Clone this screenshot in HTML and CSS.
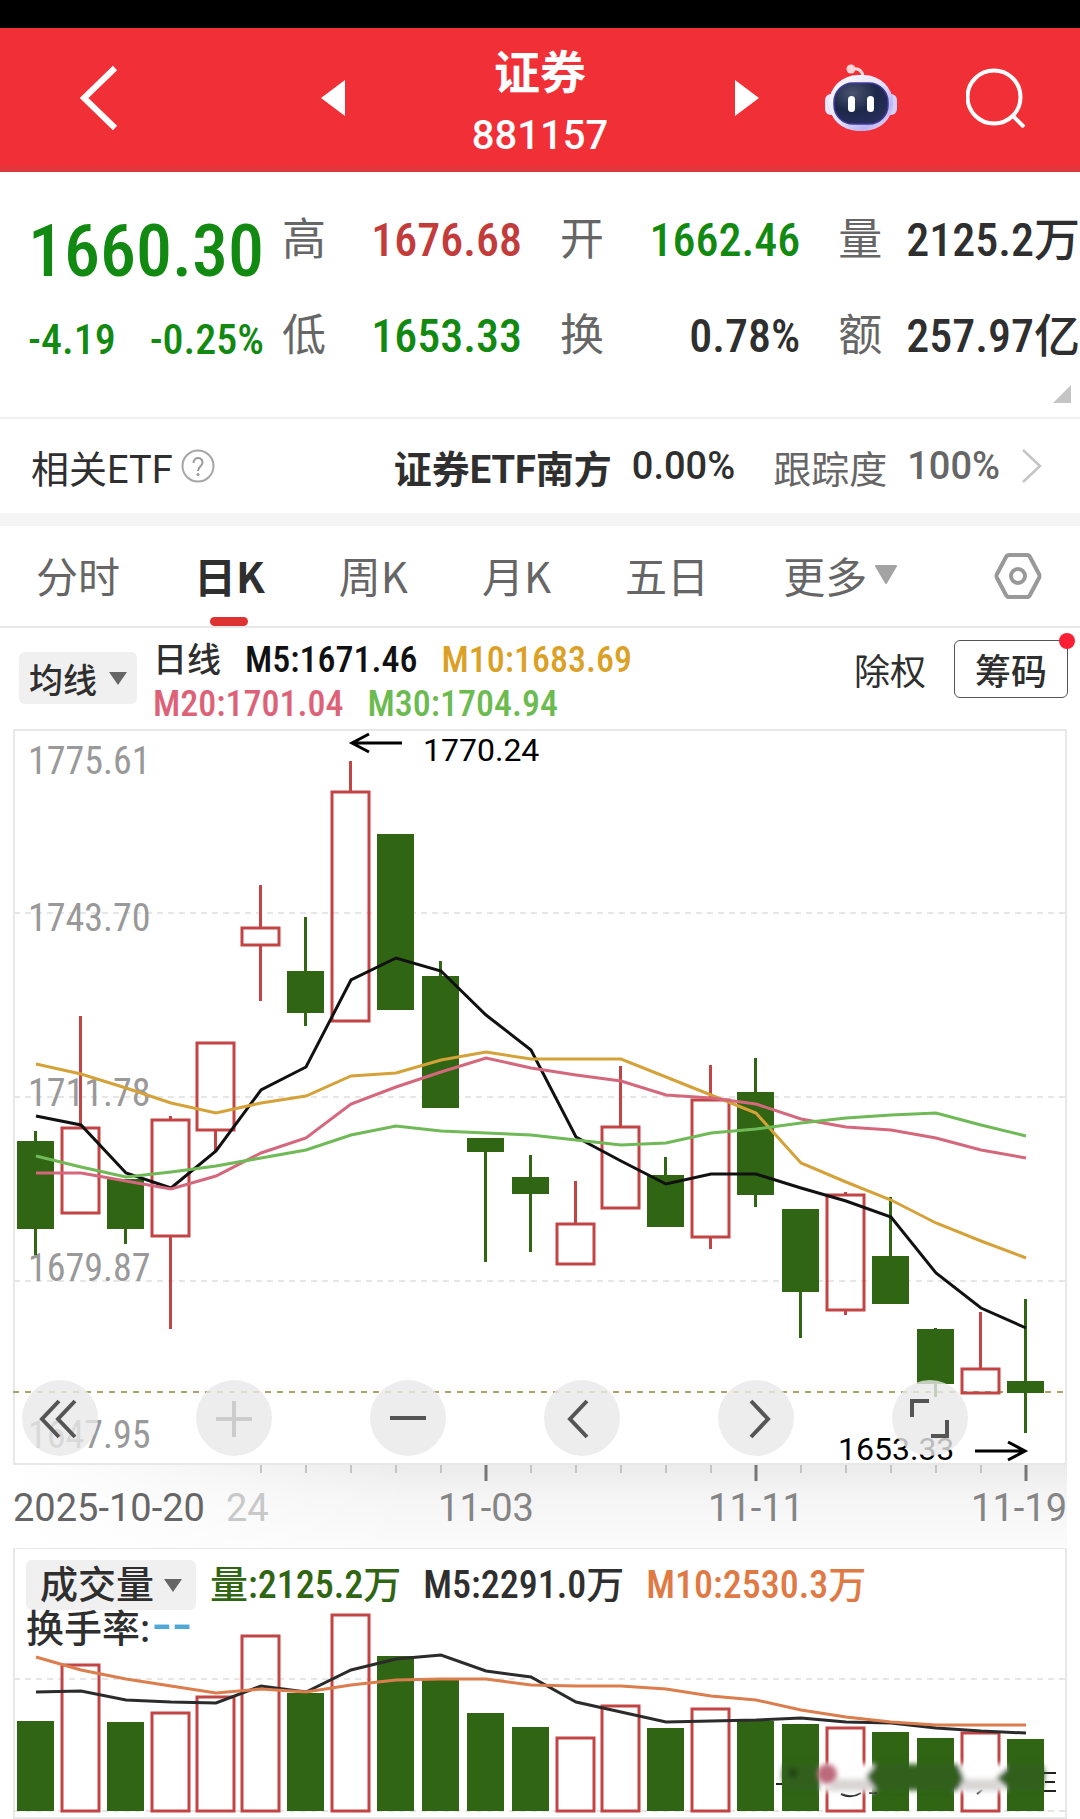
FILE: index.html
```html
<!DOCTYPE html>
<html lang="zh-CN">
<head>
<meta charset="utf-8">
<meta name="viewport" content="width=device-width, initial-scale=1">
<title>证券 881157</title>
<link rel="stylesheet" href="styles.css">
</head>
<body>
<div class="status-bar"></div>
<header class="header">
  <button class="icon-btn back" aria-label="返回">
    <svg width="38" height="66" viewBox="0 0 38 66"><path d="M35 3 4 33l31 30" fill="none" stroke="#fff" stroke-width="6"/></svg>
  </button>
  <div class="switcher">
    <button class="icon-btn" aria-label="上一个"><svg width="24" height="36" viewBox="0 0 24 36"><path d="M24 0v36L0 18z" fill="#fff"/></svg></button>
    <h1 class="title"><span class="name">证券</span><span class="code">881157</span></h1>
    <button class="icon-btn" aria-label="下一个"><svg width="24" height="36" viewBox="0 0 24 36"><path d="M0 0v36l24-18z" fill="#fff"/></svg></button>
  </div>
  <div class="actions">
    <button class="icon-btn" aria-label="智能助手">
      <svg width="72" height="68" viewBox="0 0 72 68">
        <defs>
          <linearGradient id="shell" x1="0" y1="0" x2="1" y2="1"><stop offset="0" stop-color="#fff"/><stop offset=".5" stop-color="#e6e2fb"/><stop offset=".75" stop-color="#b9b4f2"/><stop offset="1" stop-color="#fbe3ee"/></linearGradient>
          <radialGradient id="visor" cx=".35" cy=".25" r=".9"><stop offset="0" stop-color="#4a5470"/><stop offset=".5" stop-color="#1d2749"/><stop offset="1" stop-color="#2a3160"/></radialGradient>
        </defs>
        <path d="M27 5c6-1 10 1 11 7" fill="none" stroke="#fbd9dc" stroke-width="3"/>
        <circle cx="26" cy="5" r="4.500" fill="#ffd5d8"/>
        <rect x="0" y="30" width="14" height="21" rx="6" fill="#e9e6fb"/>
        <rect x="58" y="30" width="14" height="21" rx="6" fill="#d3cff8"/>
        <rect x="4" y="11" width="64" height="56" rx="29" fill="url(#shell)"/>
        <rect x="9" y="19" width="54" height="41" rx="19" fill="url(#visor)" stroke="#3f3a9c" stroke-width="1.500"/>
        <rect x="23" y="32" width="7" height="16" rx="3.500" fill="#fff"/>
        <rect x="42" y="32" width="7" height="16" rx="3.500" fill="#fff"/>
      </svg>
    </button>
    <button class="icon-btn" aria-label="搜索">
      <svg width="60" height="60" viewBox="0 0 60 60" fill="none" stroke="#fff" stroke-width="4"><circle cx="28" cy="29" r="26.500"/><path d="m47 48 11 11"/></svg>
    </button>
  </div>
</header>

<section class="quote">
  <div class="last down">
    <strong class="price">1660.30</strong>
    <p class="change"><span>-4.19</span><span>-0.25%</span></p>
  </div>
  <dl class="stats">
    <dt>高</dt><dd class="up">1676.68</dd><dt>开</dt><dd class="down">1662.46</dd><dt>量</dt><dd class="total">2125.2<b>万</b></dd>
    <dt>低</dt><dd class="down">1653.33</dd><dt>换</dt><dd>0.78%</dd><dt>额</dt><dd class="total">257.97<b>亿</b></dd>
  </dl>
  <svg class="corner" width="18" height="18" viewBox="0 0 18 18"><path d="M18 0v18H0z" fill="#c4c4c4"/></svg>
</section>

<a class="etf" href="#etf">
  <span>相关ETF</span>
  <svg width="34" height="34" viewBox="0 0 34 34"><circle cx="17" cy="17" r="15.500" fill="none" stroke="#a6a6a6" stroke-width="2"/><path d="M12.500 14c0-7 9.500-6.500 9 0-.3 3-4.500 4-4.500 8" fill="none" stroke="#999" stroke-width="2"/><circle cx="17" cy="25.500" r="1.500" fill="#999"/></svg>
  <span class="etf-name">证券ETF南方</span>
  <span class="etf-pct">0.00%</span>
  <span class="etf-track">跟踪度</span>
  <span class="etf-rate">100%</span>
  <svg class="etf-more" width="20" height="34" viewBox="0 0 20 34"><path d="m1 1 17 16L1 33" fill="none" stroke="#c4c4c4" stroke-width="2.500"/></svg>
</a>

<nav class="tabs">
  <button class="tab">分时</button>
  <button class="tab active">日K</button>
  <button class="tab">周K</button>
  <button class="tab">月K</button>
  <button class="tab">五日</button>
  <button class="tab">更多<svg width="22" height="20" viewBox="0 0 22 20"><path d="M1 1h20L11 18z" fill="#a3a3a3" stroke="#a3a3a3" stroke-width="2" stroke-linejoin="round"/></svg></button>
  <button class="icon-btn settings" aria-label="设置">
    <svg width="48" height="48" viewBox="0 0 48 48" fill="none" stroke="#999" stroke-width="4"><path d="M15 3h18q2 0 3 2l9 17q1 2 0 4l-9 17q-1 2-3 2H15q-2 0-3-2L3 26q-1-2 0-4l9-17q1-2 3-2z"/><circle cx="24" cy="24" r="7"/></svg>
  </button>
</nav>

<section class="legend">
  <button class="chip">均线<svg width="18" height="13" viewBox="0 0 18 13"><path d="M0 0h18L9 13z" fill="#666"/></svg></button>
  <div class="averages">
    <p><b>日线</b><span class="m5">M5:1671.46</span><span class="m10">M10:1683.69</span></p>
    <p><span class="m20">M20:1701.04</span><span class="m30">M30:1704.94</span></p>
  </div>
  <div class="options">
    <button>除权</button>
    <button class="outlined">筹码<i class="dot"></i></button>
  </div>
</section>

<section class="chart">
  <svg id="price-chart" class="canvas" viewBox="0 728 1080 820" role="img" aria-label="日K线图">
    <defs>
      <linearGradient id="fall" x1="0" y1="0" x2="0" y2="1"><stop offset="0" stop-color="#ebebeb"/><stop offset=".4" stop-color="#f5f5f5"/><stop offset="1" stop-color="#fbfbfb"/></linearGradient>
      <linearGradient id="fade" x1="0" y1="0" x2="1" y2="0"><stop offset="0" stop-color="#fff"/><stop offset="1" stop-color="#fff" stop-opacity="0"/></linearGradient>
    </defs>
    <rect x="14" y="1464" width="1053" height="84" fill="url(#fall)"/>
    <rect x="13" y="1464" width="400" height="84" fill="url(#fade)"/>
    <rect class="frame" x="14" y="730" width="1052" height="734"/>
    <path class="grid-line" d="M14 913h1052M14 1097h1052M14 1281h1052"/>
    <path d="M13 1392h1053" stroke="#a9a56c" stroke-width="2" stroke-dasharray="6 6"/>
    <g class="scale">
      <text x="28" y="774">1775.61</text>
      <text x="28" y="931">1743.70</text>
      <text x="28" y="1106">1711.78</text>
      <text x="28" y="1281">1679.87</text>
      <text x="28" y="1448">1647.95</text>
    </g>
    <g id="candles"></g>
    <g id="price-lines"></g>
    <g id="ticks"></g>
    <g class="mark">
      <path d="M402 743h-50m17-9-17 9 17 9M975 1451h50m-17-9 17 9-17 9"/>
      <text x="423" y="761">1770.24</text>
      <text x="838" y="1460">1653.33</text>
    </g>
    <g class="dates">
      <text class="start" x="13" y="1521">2025-10-20</text>
      <text class="ghost" x="226" y="1521">24</text>
      <text x="486" y="1521" text-anchor="middle">11-03</text>
      <text x="756" y="1521" text-anchor="middle">11-11</text>
      <text x="1067" y="1521" text-anchor="end">11-19</text>
    </g>
  </svg>
  <div class="controls">
    <button aria-label="最左"><svg viewBox="0 0 76 76"><path d="M37 21 20 39l17 18M53 21 36 39l17 18"/></svg></button>
    <button aria-label="放大" disabled><svg viewBox="0 0 76 76"><path d="M20 39h36M38 21v36"/></svg></button>
    <button aria-label="缩小"><svg viewBox="0 0 76 76"><path d="M20 38h36"/></svg></button>
    <button aria-label="左移"><svg viewBox="0 0 76 76"><path d="M43 21 26 39l17 18"/></svg></button>
    <button aria-label="右移"><svg viewBox="0 0 76 76"><path d="m33 21 17 18-17 18"/></svg></button>
    <button aria-label="全屏"><svg viewBox="0 0 76 76"><path d="M20 37V21h17M55 40v16H39"/></svg></button>
  </div>
</section>

<section class="chart">
  <svg id="volume-chart" class="canvas" viewBox="0 1548 1080 271" role="img" aria-label="成交量图">
    <defs><filter id="soft" x="-20%" y="-40%" width="140%" height="180%"><feGaussianBlur stdDeviation="2.500"/></filter></defs>
    <rect class="frame" x="14" y="1548" width="1052" height="270"/>
    <path class="grid-line" d="M14 1679h1052M14 1811h1052"/>
    <g id="bars"></g>
    <g id="volume-lines"></g>
    <path d="M841 1794q10 5 20-1M869 1793h8M977 1794l5-4M1044 1773h12M1045 1782h10M1044 1791h12M776 1784h6" fill="none" stroke="#222" stroke-width="2"/>
    <g filter="url(#soft)">
      <path d="M822 1764h52v28h-52zM955 1764h50v28h-50z" fill="#fff"/>
      <path d="M836 1779h36l4 12h-52zM958 1779h38l8 12h-40z" fill="#d9d5d5"/>
      <path d="M784 1764h32l4 26h-34l-4-14zM866 1776l10-12h82l6 14-6 13-82-1zM996 1778l16-14h30l3 10-3 17h-32z" fill="#33611c"/>
      <circle cx="793" cy="1773" r="5" fill="#224515"/>
    </g>
    <circle cx="827" cy="1774" r="10" fill="#bb6a7b" filter="url(#soft)"/>
  </svg>
  <div class="volume-head">
    <button class="chip big">成交量<svg width="18" height="13" viewBox="0 0 18 13"><path d="M0 0h18L9 13z" fill="#666"/></svg></button>
    <span class="vol">量:2125.2万</span>
    <span class="v5">M5:2291.0万</span>
    <span class="v10">M10:2530.3万</span>
    <p class="turnover">换手率:<span class="none">--</span></p>
  </div>
</section>
<script src="chart.js"></script>
</body>
</html>
```
FILE: styles.css
```css
* { box-sizing: border-box; margin: 0; padding: 0; }
body {
  background: #fff;
  color: #2f2f2f;
  font-family: Roboto, "Noto Sans CJK SC", sans-serif;
  font-size: 38px;
}
svg { display: block; flex: none; }
button { border: 0; background: none; font: inherit; color: inherit; }
a { color: inherit; text-decoration: none; }

.status-bar { height: 28px; background: #000; }
.header {
  display: grid;
  grid-template-columns: 1fr 438px 1fr;
  align-items: center;
  height: 144px;
  background: #f12f36;
  border-bottom: 6px solid #e1373c;
  color: #fff;
}
.back { justify-self: start; margin-left: 80px; }
.switcher { display: flex; align-items: center; justify-content: space-between; }
.title { display: flex; flex-direction: column; align-items: center; padding-top: 14px; font-weight: 500; }
.name { font-size: 46px; line-height: 62px; font-weight: 700; }
.code { font-size: 40px; line-height: 64px; }
.actions { display: flex; align-items: center; justify-content: space-between; padding: 0 54px 0 66px; }

.quote { position: relative; display: flex; height: 247px; padding-top: 20px; border-bottom: 2px solid #f1f1f1; }
.down { color: #128a12; }
.up { color: #c23c3c; }
.last { width: 282px; padding: 16px 18px 0 28px; font-family: "Roboto Condensed", Roboto, sans-serif; font-weight: 500; }
.price { display: block; font-size: 72px; line-height: 88px; font-weight: 500; }
.change { display: flex; justify-content: space-between; font-size: 42px; line-height: 88px; }
.stats {
  flex: 1;
  display: grid;
  grid-template-columns: 44px 1fr 82px 1fr 82px auto;
  grid-auto-rows: 96px;
  line-height: 96px;
}
.stats dt { font-size: 44px; color: #666; text-align: right; }
.stats dd { font-family: "Roboto Condensed", Roboto, "Noto Sans CJK SC", sans-serif; font-size: 46px; font-weight: 500; text-align: right; }
.stats .total { padding-left: 24px; white-space: nowrap; }
.stats b { font-size: 46px; font-weight: 500; }
.corner { position: absolute; right: 9px; bottom: 14px; }

.etf {
  display: flex;
  align-items: center;
  height: 107px;
  padding: 0 38px 0 31px;
  border-bottom: 13px solid #f4f4f4;
  white-space: nowrap;
}
.etf svg { margin-left: 8px; }
.etf-name { font-weight: 700; margin-left: auto; }
.etf-pct { font-weight: 500; margin-left: 20px; }
.etf-track { color: #666; margin-left: 38px; }
.etf-rate { color: #666; font-weight: 500; margin-left: 20px; }
.etf .etf-more { margin-left: 22px; }

.tabs {
  display: flex;
  align-items: center;
  gap: 74px;
  height: 102px;
  padding: 0 38px 0 36px;
  border-bottom: 2px solid #e8e8e8;
  color: #666;
  font-family: "Noto Sans CJK SC", sans-serif;
  font-size: 42px;
}
.tab { position: relative; display: flex; align-items: center; gap: 8px; height: 100px; padding-bottom: 3px; white-space: nowrap; }
.settings { margin-left: auto; }
.active { color: #2f2f2f; font-weight: 700; }
.active::after {
  content: "";
  position: absolute;
  left: 50%;
  bottom: 0;
  width: 38px;
  height: 9px;
  margin-left: -19px;
  border-radius: 5px;
  background: #dc3232;
}

.legend { display: flex; align-items: center; height: 100px; padding: 0 12px 0 19px; }
.chip {
  display: flex;
  align-items: center;
  gap: 12px;
  height: 52px;
  padding: 0 10px;
  border-radius: 6px;
  background: #f0f0f0;
  font-size: 34px;
  font-weight: 500;
}
.averages { flex: 1; padding-top: 8px; margin-left: 16px; font-family: "Roboto Condensed", Roboto, "Noto Sans CJK SC", sans-serif; font-size: 36px; font-weight: 500; line-height: 44px; }
.averages p { display: flex; gap: 24px; white-space: nowrap; }
.averages b { font-size: 34px; font-weight: 500; }
.m5 { color: #111; }
.m10 { color: #dba126; }
.m20 { color: #dd6278; }
.m30 { color: #6cbb50; }
.options { display: flex; align-items: center; gap: 28px; padding-bottom: 18px; font-size: 36px; }
.outlined { position: relative; width: 114px; height: 58px; border: 1px solid #555; border-radius: 6px; font-weight: 500; }
.dot { position: absolute; top: -8px; right: -8px; width: 16px; height: 16px; border-radius: 50%; background: #fa1f34; }

.chart { position: relative; }
.canvas { width: 100%; height: auto; }
.frame { fill: none; stroke: #e8e8e8; stroke-width: 2; }
.grid-line { fill: none; stroke: #e6e6e6; stroke-width: 2; stroke-dasharray: 6 5; }
.scale text { font: 38px "Roboto Condensed", Roboto, sans-serif; fill: #999; }
.mark path { fill: none; stroke: #000; stroke-width: 3; }
.mark text { font-size: 32px; fill: #000; }
.dates text { font-size: 38px; fill: #858585; }
.dates .start { fill: #666; }
.dates .ghost { fill: #c8c8c8; }
.rise { fill: none; stroke: #c34444; stroke-width: 3; }
.drop { fill: #2f6513; stroke: #2f6513; }
.line { fill: none; stroke-width: 3; }

.controls { position: absolute; top: 652px; left: 22px; display: flex; gap: 98px; }
.controls button { width: 76px; height: 76px; border-radius: 50%; background: rgba(233, 233, 233, .8); }
.controls path { fill: none; stroke: #555; stroke-width: 4; }
.controls button:disabled path { stroke: #ccc; }

.volume-head {
  position: absolute;
  top: 12px;
  left: 26px;
  display: grid;
  grid-template-columns: auto auto auto auto;
  column-gap: 22px;
  align-items: center;
  font-family: "Roboto Condensed", Roboto, "Noto Sans CJK SC", sans-serif;
  font-weight: 500;
  line-height: 50px;
  white-space: nowrap;
}
.big { gap: 10px; height: 50px; padding: 0 14px; margin-right: -8px; font-size: 38px; }
.vol { color: #2f6513; }
.v10 { color: #e07a45; }
.turnover { grid-column: 1 / -1; height: 38px; line-height: 38px; }
.none { margin-left: 2px; color: #4fa9d8; font-family: "DejaVu Sans", sans-serif; font-size: 56px; font-weight: 400; line-height: 0; }
```
FILE: chart.js
```js
const SVG = "http://www.w3.org/2000/svg";
const STEP = 45, FIRST = 35, HALF = 18;

// [direction, high, body top, body bottom, low, volume top]
const days = [
  ["g", 1131, 1141, 1229, 1255, 1721], ["r", 1016, 1128, 1213, 1213, 1665],
  ["g", 1179, 1179, 1229, 1244, 1722], ["r", 1116, 1120, 1236, 1329, 1713],
  ["r", 1043, 1043, 1130, 1151, 1697], ["r", 885, 928, 945, 1001, 1636],
  ["g", 917, 971, 1013, 1026, 1693], ["r", 761, 792, 1021, 1021, 1615],
  ["g", 834, 834, 1010, 1010, 1656], ["g", 961, 976, 1108, 1108, 1680],
  ["g", 1138, 1138, 1152, 1262, 1713], ["g", 1155, 1177, 1194, 1252, 1727],
  ["r", 1181, 1224, 1264, 1264, 1738], ["r", 1066, 1127, 1208, 1208, 1706],
  ["g", 1157, 1175, 1227, 1227, 1728], ["r", 1065, 1100, 1237, 1249, 1709],
  ["g", 1058, 1092, 1195, 1207, 1721], ["g", 1209, 1209, 1292, 1338, 1724],
  ["r", 1192, 1195, 1310, 1315, 1728], ["g", 1197, 1256, 1304, 1304, 1732],
  ["g", 1328, 1329, 1384, 1397, 1738], ["r", 1312, 1369, 1393, 1393, 1733],
  ["g", 1299, 1381, 1393, 1433, 1739]
];
const priceLines = {
  "#111": [1116, 1125, 1173, 1188, 1151, 1090, 1067, 980, 958, 971, 1015, 1050, 1137, 1161, 1184, 1174, 1174, 1188, 1201, 1217, 1273, 1308, 1328],
  "#d4a238": [1064, 1074, 1088, 1103, 1113, 1103, 1096, 1076, 1073, 1060, 1052, 1059, 1059, 1059, 1077, 1095, 1113, 1163, 1182, 1200, 1223, 1241, 1258],
  "#d5677c": [1173, 1173, 1181, 1189, 1176, 1153, 1138, 1104, 1087, 1072, 1058, 1068, 1075, 1081, 1095, 1098, 1104, 1119, 1127, 1130, 1138, 1150, 1158],
  "#70b957": [1156, 1167, 1177, 1172, 1166, 1158, 1150, 1135, 1126, 1131, 1133, 1135, 1140, 1145, 1143, 1133, 1129, 1123, 1118, 1115, 1113, 1125, 1136]
};
const volumeLines = {
  "#2b2b2b": [1692, 1691, 1700, 1702, 1703, 1686, 1692, 1670, 1659, 1655, 1671, 1677, 1702, 1712, 1722, 1721, 1720, 1718, 1722, 1723, 1728, 1731, 1733],
  "#db7d4d": [1657, 1670, 1679, 1686, 1693, 1689, 1692, 1685, 1680, 1679, 1679, 1685, 1686, 1686, 1689, 1696, 1700, 1710, 1717, 1722, 1725, 1725, 1725]
};

const centre = i => FIRST + i * STEP;
function add(parent, tag, attrs) {
  const node = document.createElementNS(SVG, tag);
  for (const key in attrs) node.setAttribute(key, attrs[key]);
  document.getElementById(parent).appendChild(node);
}
function box(parent, kind, x, top, bottom) {
  if (kind === "g") add(parent, "rect", { x: x - HALF, y: top, width: 2 * HALF + 1, height: bottom - top, fill: "#2f6513" });
  else add(parent, "rect", { x: x - HALF, y: top, width: 2 * HALF + 1, height: bottom - top, class: "rise" });
}

days.forEach(([kind, high, top, bottom, low, volume], i) => {
  const x = centre(i);
  const d = `M${x + .5} ${high}V${top}M${x + .5} ${bottom}V${low}`;
  add("candles", "path", { d, class: kind === "g" ? "drop" : "rise", "stroke-width": 3 });
  box("candles", kind, x, top, bottom);
  box("bars", kind, x, volume, 1811);
  if (i > 4) {
    const major = i === 10 || i === 16 || i === 22;
    add("ticks", "path", { d: `M${x + 1} 1465v${major ? 16 : 8}`, stroke: major ? "#777" : "#c4c4c4", "stroke-width": major ? 3 : 2 });
  }
});
function drawLines(parent, lines) {
  for (const stroke in lines)
    add(parent, "polyline", { class: "line", stroke, points: lines[stroke].map((y, i) => `${centre(i) + 1},${y}`).join(" ") });
}
drawLines("price-lines", priceLines);
drawLines("volume-lines", volumeLines);
```
